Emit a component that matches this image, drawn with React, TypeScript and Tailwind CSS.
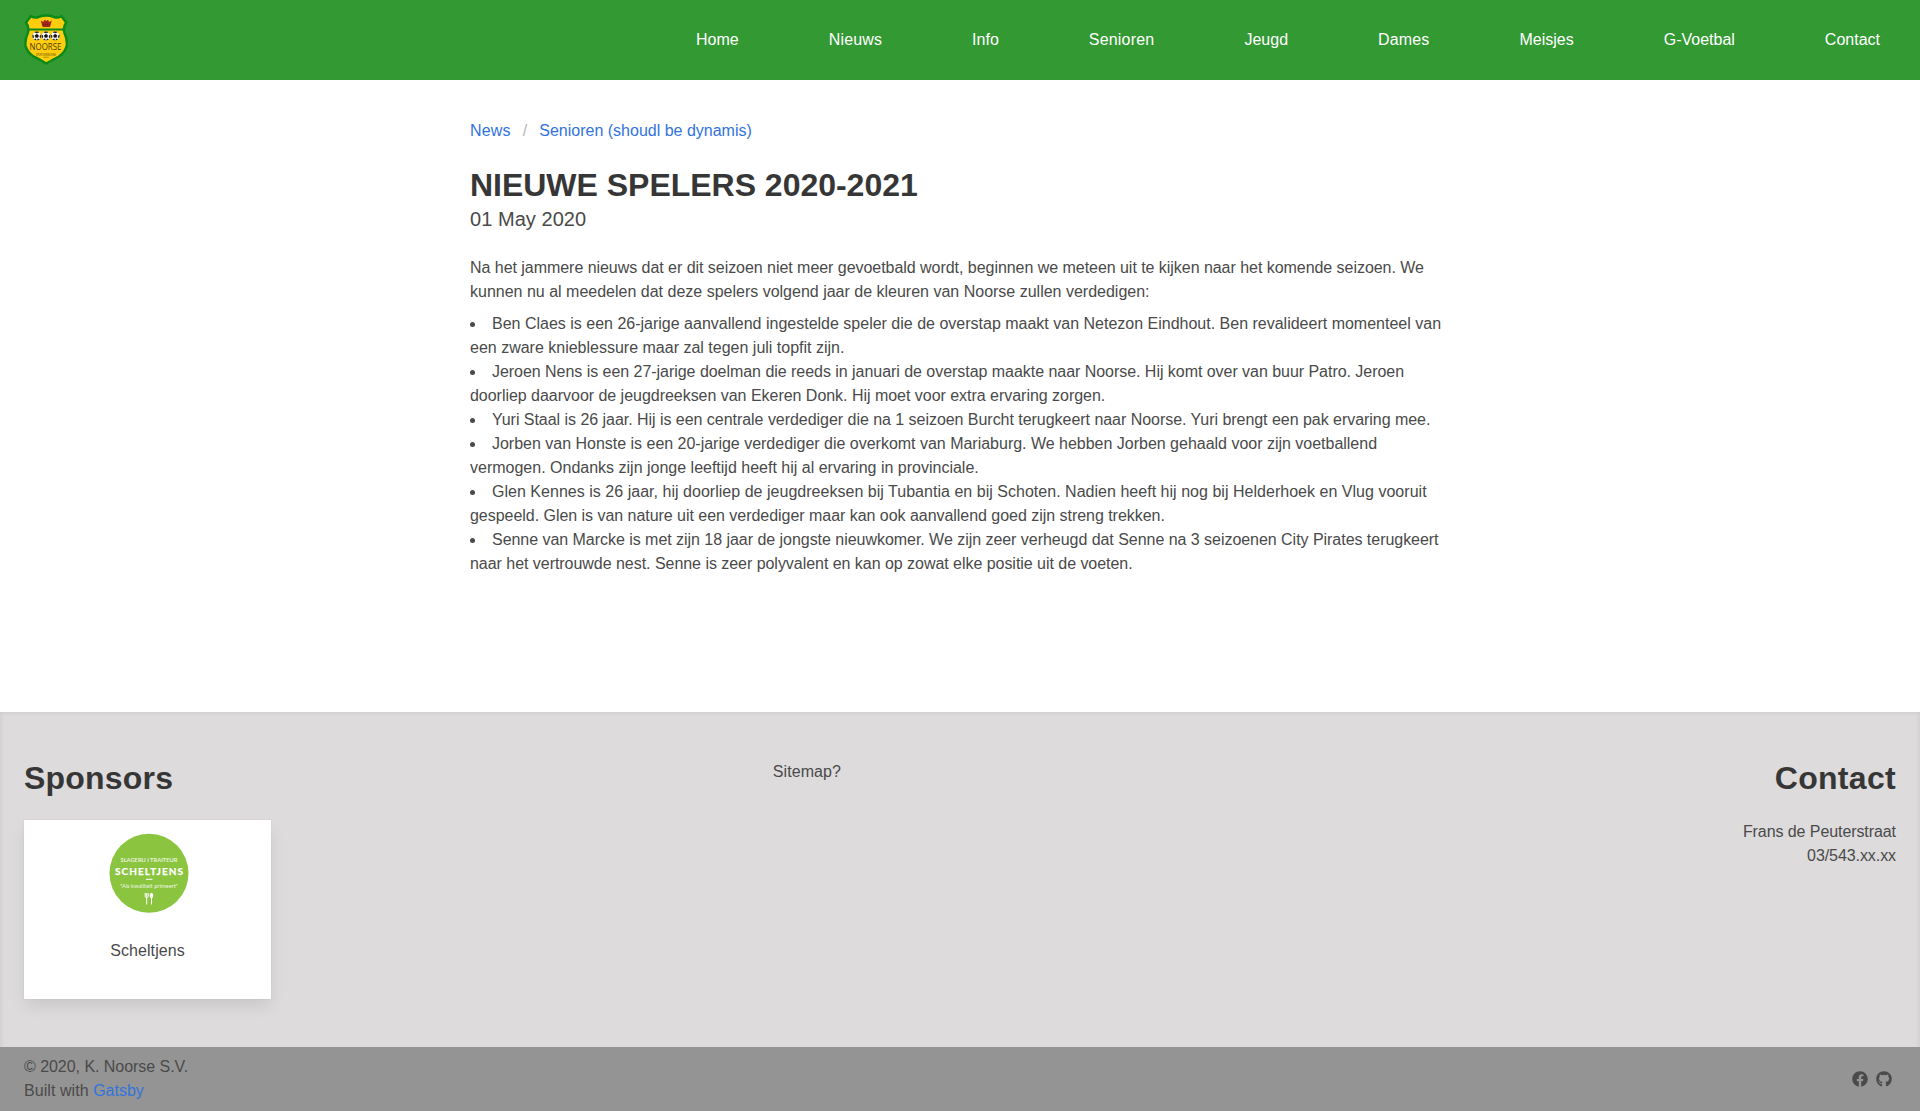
import { FaFacebook, FaGithub } from "react-icons/fa";

const links = [
  { label: "Home", tracking: "tracking-normal" },
  { label: "Nieuws", tracking: "tracking-[0.15px]" },
  { label: "Info", tracking: "tracking-normal" },
  { label: "Senioren", tracking: "tracking-[0.2px]" },
  { label: "Jeugd", tracking: "tracking-normal" },
  { label: "Dames", tracking: "tracking-[0.15px]" },
  { label: "Meisjes", tracking: "tracking-normal" },
  { label: "G-Voetbal", tracking: "tracking-normal" },
  { label: "Contact", tracking: "tracking-normal" },
];

const players = [
  {
    intro: "Ben Claes is een 26-jarige aanvallend ingestelde speler die de overstap maakt van Netezon Eindhout. Ben revalideert momenteel van",
    introTracking: "tracking-normal",
    rest: "een zware knieblessure maar zal tegen juli topfit zijn.",
    restTracking: "tracking-normal",
  },
  {
    intro: "Jeroen Nens is een 27-jarige doelman die reeds in januari de overstap maakte naar Noorse. Hij komt over van buur Patro. Jeroen",
    introTracking: "tracking-[-0.039px]",
    rest: "doorliep daarvoor de jeugdreeksen van Ekeren Donk. Hij moet voor extra ervaring zorgen.",
    restTracking: "tracking-[-0.028px]",
  },
  {
    intro: "Yuri Staal is 26 jaar. Hij is een centrale verdediger die na 1 seizoen Burcht terugkeert naar Noorse. Yuri brengt een pak ervaring mee.",
    introTracking: "tracking-[-0.037px]",
    rest: "",
    restTracking: "tracking-normal",
  },
  {
    intro: "Jorben van Honste is een 20-jarige verdediger die overkomt van Mariaburg. We hebben Jorben gehaald voor zijn voetballend",
    introTracking: "tracking-[-0.012px]",
    rest: "vermogen. Ondanks zijn jonge leeftijd heeft hij al ervaring in provinciale.",
    restTracking: "tracking-normal",
  },
  {
    intro: "Glen Kennes is 26 jaar, hij doorliep de jeugdreeksen bij Tubantia en bij Schoten. Nadien heeft hij nog bij Helderhoek en Vlug vooruit",
    introTracking: "tracking-[0.025px]",
    rest: "gespeeld. Glen is van nature uit een verdediger maar kan ook aanvallend goed zijn streng trekken.",
    restTracking: "tracking-[-0.035px]",
  },
  {
    intro: "Senne van Marcke is met zijn 18 jaar de jongste nieuwkomer. We zijn zeer verheugd dat Senne na 3 seizoenen City Pirates terugkeert",
    introTracking: "tracking-[-0.037px]",
    rest: "naar het vertrouwde nest. Senne is zeer polyvalent en kan op zowat elke positie uit de voeten.",
    restTracking: "tracking-[-0.038px]",
  },
];

function Ball({ x }: { x: number }) {
  return (
    <g transform={`translate(${x} 22)`}>
      <circle r="4.3" fill="#fff" />
      <path d="M0-1.9 1.9-.6 1.2 1.600H-1.2L-1.9-.6ZM-2.200-3.700 0-2.900 2.200-3.700 1-4.300H-1ZM-4.200-1.200-3-.2-3.200 2-4 1.600ZM4.200-1.200 3-.2 3.200 2 4 1.600ZM-2.600 3.400-1 2.700-.5 4.200ZM2.600 3.400 1 2.700.5 4.200Z" fill="#111" stroke="#111" strokeWidth=".3" />
    </g>
  );
}

function ClubLogo() {
  return (
    <svg width="44" height="52" viewBox="0 0 44 52" aria-label="K. Noorse S.V.">
      <path
        d="M6.8 2.2Q11 4.600 15 2.800Q18.500 1.600 22.2 1.600Q26 1.600 29.500 2.800Q33.500 4.600 37.500 2.200L42.200 8.500Q38.600 13.500 40.500 19Q43.500 25.500 42.800 31.500Q41.500 38 35 42.500Q30 45 22.200 49.500Q15 45 9.500 42.500Q3 38 1.500 31.500Q.8 25.500 3.800 19Q5.800 13.500 2 8.500Z"
        fill="#ffcd0d"
        stroke="#0b8b16"
        strokeWidth="2.500"
      />
      <path d="M4.500 15.500H40" stroke="#0b8b16" strokeWidth="2" />
      <path d="M16.800 6.500 19.300 8 20.500 5.800 22.300 7 24 5.800 25.200 8 27.800 6.500 26 13H18.600Z" fill="#a3261a" />
      <path d="M19 10.500H26" stroke="#5c2310" strokeWidth="1" strokeDasharray="1 1" />
      <Ball x={12.8} />
      <Ball x={22} />
      <Ball x={31.2} />
      <text x="21.500" y="36" textAnchor="middle" textLength="32" lengthAdjust="spacingAndGlyphs" fontSize="9.800" fill="#4b3d05" fontFamily="Open Sans, sans-serif">
        NOORSE
      </text>
      <text x="22" y="41.800" textAnchor="middle" textLength="20" lengthAdjust="spacingAndGlyphs" fontSize="3.500" fill="#4b3d05" fontFamily="Open Sans, sans-serif">
        SPORTVERENIGING
      </text>
      <path d="M19.500 43.200H24.500" stroke="#8b7408" strokeWidth="1" strokeDasharray="1 .4" />
    </svg>
  );
}

function SponsorLogo() {
  return (
    <svg width="80" height="80" viewBox="0 0 80 80" aria-label="Scheltjens" className="ml-[2px]">
      <circle cx="40" cy="40.300" r="39.500" fill="#8bc53f" />
      <g fill="#fff" textAnchor="middle" fontFamily="Lato, sans-serif">
        <text x="40" y="29" fontSize="5.200" textLength="57" lengthAdjust="spacingAndGlyphs" fontWeight="700" opacity=".8">SLAGERIJ I TRAITEUR</text>
        <text x="40" y="41.600" fontSize="10" textLength="68" fontWeight="700" stroke="#fff" strokeWidth=".25">SCHELTJENS</text>
        <text x="40" y="54.800" fontSize="6" textLength="58" lengthAdjust="spacingAndGlyphs" opacity=".85">"Als kwaliteit primeert"</text>
      </g>
      <path d="M37 46.300H43.500" stroke="#fff" strokeWidth="1" />
      <path d="M36.200 60V63.500Q36.200 64.500 37.700 64.500T39.200 63.500V60M37.700 60V71.500M42.500 64V71.500" stroke="#fff" strokeWidth="1" fill="none" />
      <ellipse cx="42.500" cy="62.500" rx="1.800" ry="2.800" fill="#fff" />
    </svg>
  );
}

export default function App() {
  return (
    <div className="flex h-[1111px] flex-col bg-white font-['Liberation_Sans',Arial,sans-serif] text-base text-[#4a4a4a]">
      <header className="flex h-20 shrink-0 items-center justify-between bg-[#339933] pr-10 pl-6">
        <ClubLogo />
        <nav className="flex gap-[90px] text-white">
          {links.map(({ label, tracking }) => (
            <a key={label} href="#" className={tracking}>{label}</a>
          ))}
        </nav>
      </header>

      <main className="mx-auto w-[980px] grow pt-[39px]">
        <nav className="flex text-[#3273dc]">
          <a href="#" className="tracking-[0.2px]">News</a>
          <span className="px-3 text-[#b5b5b5]">/</span>
          <a href="#">Senioren (shoudl be dynamis)</a>
        </nav>
        <h1 className="mt-6 text-[32px] leading-9 font-bold tracking-[-0.02px] text-[#363636]">NIEUWE SPELERS 2020-2021</h1>
        <p className="mt-1 text-xl leading-[25px] tracking-[0.05px]">01 May 2020</p>
        <p className="mt-6">
          <span className="tracking-[-0.042px]">
            Na het jammere nieuws dat er dit seizoen niet meer gevoetbald wordt, beginnen we meteen uit te kijken naar
            het komende seizoen. We
          </span>{" "}
          kunnen nu al meedelen dat deze spelers volgend jaar de kleuren van Noorse zullen verdedigen:
        </p>
        <ul className="mt-2 list-inside list-disc">
          {players.map(({ intro, introTracking, rest, restTracking }) => (
            <li key={intro}>
              <span className={introTracking}>{intro}</span> <span className={restTracking}>{rest}</span>
            </li>
          ))}
        </ul>
      </main>

      <footer className="flex h-[399px] shrink-0 flex-col bg-[#dddbdc] shadow-[inset_0_0_5px_rgba(10,10,10,0.1)]">
        <div className="flex h-[335px] px-6 pt-12">
          <section className="w-2/5">
            <h2 className="text-[32px] leading-9 font-bold tracking-[0.2px] text-[#363636]">Sponsors</h2>
            <div className="mt-6 flex h-[179px] w-[247px] flex-col items-center bg-white pt-[13px] shadow-[0_8px_16px_-2px_rgba(10,10,10,0.1),0_0_0_1px_rgba(10,10,10,0.02)]">
              <SponsorLogo />
              <p className="mt-[26px] tracking-[0.08px]">Scheltjens</p>
            </div>
          </section>
          <section className="w-2/5 tracking-[0.07px]">Sitemap?</section>
          <section className="w-1/5 text-right">
            <h2 className="text-[32px] leading-9 font-bold tracking-[0.3px] text-[#363636]">Contact</h2>
            <p className="mt-6 tracking-[-0.08px]">Frans de Peuterstraat<br />03/543.xx.xx</p>
          </section>
        </div>
        <div className="flex h-16 items-center justify-between bg-[#949494] pr-7 pl-6">
          <p>
            <span className="tracking-[-0.04px]">© 2020, K. Noorse S.V.</span>
            <br />
            <span className="tracking-[0.06px]">Built with </span>
            <a href="#" className="text-[#3273dc]">Gatsby</a>
          </p>
          <div className="flex gap-2">
            <FaFacebook size={16} />
            <FaGithub size={16} />
          </div>
        </div>
      </footer>
    </div>
  );
}
